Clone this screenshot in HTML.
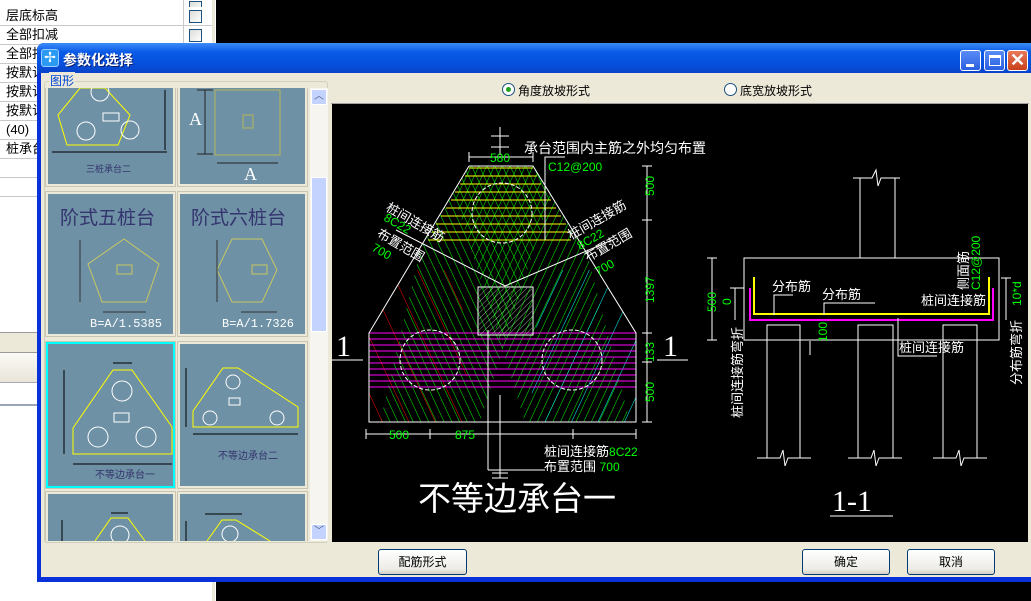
<!DOCTYPE html>
<html><head><meta charset="utf-8">
<style>
*{margin:0;padding:0;box-sizing:border-box}
body{width:1031px;height:601px;overflow:hidden;background:#000;position:relative;font-family:"Liberation Sans","Noto Sans CJK SC","WenQuanYi Zen Hei",sans-serif;font-size:12px}
.abs{position:absolute}
.row{position:absolute;left:0;width:212px;height:19px;border-bottom:1px solid #c8c8c8;background:#fff;font-size:13px;line-height:18px;padding-left:6px;color:#000}
.chk{position:absolute;left:189px;top:3px;width:13px;height:13px;border:1px solid #1c5180;background:linear-gradient(135deg,#dcdcd7,#fff)}
.cell{position:absolute;background:#6e91a6;border:2px solid #ece9d8;outline:1px solid #c9c5b3}
.btn{position:absolute;height:26px;border:1px solid #003c74;border-radius:3px;background:linear-gradient(#fff,#ecebe6 80%,#d6d0c5);text-align:center;line-height:24px;font-size:12px;color:#000}
.tb{position:absolute;top:50px;width:21px;height:21px;border:1px solid #fff;border-radius:3px;background:linear-gradient(#5a8cf6,#2a5fe0)}
</style></head><body>
<div class="abs" style="left:0;top:0;width:216px;height:601px;background:#fff"></div>
<div class="abs" style="left:212px;top:0;width:3px;height:601px;background:#ece9d8"></div>
<div class="row" style="top:-2px"><div class="chk"></div></div>
<div class="row" style="top:7px;height:19px">层底标高<div class="chk"></div></div>
<div class="row" style="top:26px">全部扣减<div class="chk"></div></div>
<div class="row" style="top:45px">全部扣</div>
<div class="row" style="top:64px">按默认</div>
<div class="row" style="top:83px">按默认</div>
<div class="row" style="top:102px">按默认</div>
<div class="row" style="top:121px">(40)</div>
<div class="row" style="top:140px">桩承台</div>
<div class="row" style="top:159px"></div>
<div class="row" style="top:178px"></div>
<div class="abs" style="left:183px;top:0;width:1px;height:200px;background:#c8c8c8"></div>
<div class="abs" style="left:0;top:332px;width:40px;height:1px;background:#999"></div>
<div class="abs" style="left:0;top:333px;width:40px;height:19px;background:#ece9d8"></div>
<div class="abs" style="left:0;top:352px;width:40px;height:1px;background:#999"></div>
<div class="abs" style="left:0;top:353px;width:40px;height:29px;background:linear-gradient(#fbfaf6,#e8e5d8)"></div>
<div class="abs" style="left:0;top:382px;width:40px;height:1px;background:#aab"></div>
<div class="abs" style="left:0;top:404px;width:40px;height:2px;background:#9aa6b8"></div>
<div class="abs" style="left:216px;top:0;width:815px;height:601px;background:#000"></div>

<div class="abs" style="left:37px;top:43px;width:1000px;height:539px;background:#0831d9;border-radius:7px 7px 0 0"></div>
<div class="abs" style="left:37px;top:43px;width:1000px;height:30px;border-radius:7px 7px 0 0;background:linear-gradient(#3d8cf7,#0a5ae8 30%,#0550dd 70%,#0a44c8)"></div>
<div class="abs" style="left:41px;top:49px;width:18px;height:18px;border-radius:3px;background:#2b9af3;border:1px solid #9cf;color:#fff;font-size:14px;line-height:15px;text-align:center">✢</div>
<div class="abs" style="left:63px;top:50px;color:#fff;font-weight:bold;font-size:14px;text-shadow:1px 1px #0a1e6e">参数化选择</div>
<div class="tb" style="left:960px"><div class="abs" style="left:5px;top:13px;width:8px;height:3px;background:#fff"></div></div>
<div class="tb" style="left:984px"><div class="abs" style="left:4px;top:4px;width:12px;height:11px;border:1px solid #fff;border-top-width:3px"></div></div>
<div class="tb" style="left:1007px;background:linear-gradient(#e97a5a,#c9401b);color:#fff;font-size:18px;line-height:19px;text-align:center;font-weight:bold">✕</div>
<div class="abs" style="left:41px;top:73px;width:990px;height:504px;background:#ece9d8"></div>

<div class="abs" style="left:44px;top:81px;width:284px;height:462px;border:1px solid #d0d0bf;border-radius:3px"></div>
<div class="abs" style="left:49px;top:72px;background:#ece9d8;color:#0046d5;font-size:12px;padding:0 1px">图形</div>
<div class="abs" style="left:45px;top:88px;width:265px;height:453px;background:#ece9d8;overflow:hidden">
 <div class="cell" style="left:1px;top:-8px;width:129px;height:106px"></div>
 <div class="cell" style="left:133px;top:-8px;width:129px;height:106px"></div>
 <div class="cell" style="left:1px;top:104px;width:129px;height:144px"></div>
 <div class="cell" style="left:133px;top:104px;width:129px;height:144px"></div>
 <div class="cell" style="left:1px;top:254px;width:129px;height:146px;border:2px solid #00ffff;outline:1px solid #c9c5b3"></div>
 <div class="cell" style="left:133px;top:254px;width:129px;height:146px"></div>
 <div class="cell" style="left:1px;top:404px;width:129px;height:60px"></div>
 <div class="cell" style="left:133px;top:404px;width:129px;height:60px"></div>
</div>
<div class="abs" style="left:310px;top:88px;width:18px;height:453px;background:#f6f5ef"></div>
<div class="abs" style="left:311px;top:89px;width:16px;height:16px;border:1px solid #fff;border-radius:2px;background:#c3d3fd;color:#4d6185;font-size:10px;text-align:center;line-height:14px">︿</div>
<div class="abs" style="left:311px;top:177px;width:16px;height:155px;border:1px solid #fff;border-radius:2px;background:#c3d3fd"></div>
<div class="abs" style="left:311px;top:524px;width:16px;height:16px;border:1px solid #fff;border-radius:2px;background:#c3d3fd;color:#4d6185;font-size:10px;text-align:center;line-height:14px">﹀</div>

<div class="abs" style="left:331px;top:75px;width:698px;height:29px;background:#ece9d8;border-bottom:1px solid #a0a0a0"></div>
<div class="abs" style="left:502px;top:83px;width:13px;height:13px;border-radius:50%;border:1px solid #1c5180;background:#fff"><div class="abs" style="left:3px;top:3px;width:5px;height:5px;border-radius:50%;background:#21a121"></div></div>
<div class="abs" style="left:518px;top:82px;font-size:12px">角度放坡形式</div>
<div class="abs" style="left:724px;top:83px;width:13px;height:13px;border-radius:50%;border:1px solid #1c5180;background:#fff"></div>
<div class="abs" style="left:740px;top:82px;font-size:12px">底宽放坡形式</div>
<div class="abs" style="left:332px;top:104px;width:696px;height:438px;background:#000"></div>

<div class="btn" style="left:378px;top:549px;width:89px">配筋形式</div>
<div class="btn" style="left:802px;top:549px;width:88px">确定</div>
<div class="btn" style="left:907px;top:549px;width:88px">取消</div>

<svg class="abs" style="left:0;top:0" width="1031" height="601" viewBox="0 0 1031 601" font-family="Liberation Sans, Noto Sans CJK SC, sans-serif">
<defs>
 <clipPath id="cv"><rect x="332" y="104" width="696" height="438"/></clipPath>
 <clipPath id="lp"><rect x="47" y="88" width="262" height="453"/></clipPath>
 <clipPath id="sh"><polygon points="469,166 533,166 636,333 636,422 369,422 369,333"/></clipPath>
 <pattern id="g1" width="7" height="7" patternUnits="userSpaceOnUse" patternTransform="rotate(25)"><line x1="0" y1="0" x2="0" y2="7" stroke="#00ff00" stroke-width="1"/></pattern>
 <pattern id="g2" width="7" height="7" patternUnits="userSpaceOnUse" patternTransform="rotate(-25)"><line x1="0" y1="0" x2="0" y2="7" stroke="#00ff00" stroke-width="1"/></pattern>
 <pattern id="rd" width="24" height="24" patternUnits="userSpaceOnUse" patternTransform="rotate(-25)"><line x1="0" y1="0" x2="0" y2="24" stroke="#ff0000"/></pattern>
 <pattern id="cy" width="24" height="24" patternUnits="userSpaceOnUse" patternTransform="rotate(25)"><line x1="0" y1="0" x2="0" y2="24" stroke="#00ffff"/></pattern>
 <pattern id="ht" width="4" height="4" patternUnits="userSpaceOnUse" patternTransform="rotate(45)"><line x1="0" y1="0" x2="0" y2="4" stroke="#fff"/></pattern>
</defs>
<g clip-path="url(#cv)" fill="none" stroke="#fff" stroke-width="1">
 <g clip-path="url(#sh)">
  <polygon points="440,166 560,166 480,422 380,422" fill="url(#g2)" stroke="none"/>
  <polygon points="445,166 565,166 630,422 525,422" fill="url(#g1)" stroke="none"/>
  <polygon points="369,270 460,270 470,422 369,422" fill="url(#rd)" stroke="none"/>
  <polygon points="540,270 636,270 636,422 530,422" fill="url(#cy)" stroke="none"/>
 </g>
 <g stroke="#ffff00">
  <line x1="469" y1="168" x2="533" y2="168"/><line x1="465" y1="176" x2="537" y2="176"/><line x1="460" y1="184" x2="541" y2="184"/>
  <line x1="455" y1="192" x2="546" y2="192"/><line x1="451" y1="200" x2="551" y2="200"/><line x1="446" y1="208" x2="556" y2="208"/>
  <line x1="441" y1="216" x2="561" y2="216"/><line x1="436" y1="224" x2="566" y2="224"/><line x1="432" y1="232" x2="570" y2="232"/><line x1="428" y1="240" x2="571" y2="240"/>
 </g>
 <g stroke="#ff00ff">
  <line x1="369" y1="333" x2="636" y2="333"/><line x1="369" y1="339" x2="636" y2="339"/><line x1="369" y1="345" x2="636" y2="345"/><line x1="369" y1="351" x2="636" y2="351"/>
  <line x1="369" y1="357" x2="636" y2="357"/><line x1="369" y1="363" x2="636" y2="363"/><line x1="369" y1="369" x2="636" y2="369"/><line x1="369" y1="375" x2="636" y2="375"/>
  <line x1="369" y1="381" x2="636" y2="381"/><line x1="369" y1="387" x2="636" y2="387"/>
 </g>
 <polyline points="469,166 533,166 636,333 636,422 369,422 369,333 469,166"/>
 <circle cx="502" cy="213" r="30" stroke-dasharray="4,2"/>
 <circle cx="430" cy="360" r="30" stroke-dasharray="4,2"/>
 <circle cx="572" cy="360" r="30" stroke-dasharray="4,2"/>
 <rect x="478" y="287" width="55" height="48"/>
 <rect x="479" y="288" width="53" height="46" fill="url(#ht)" stroke="none" opacity=".6"/>
 <polyline points="396,230 505,286 612,240"/>
 <line x1="500" y1="127" x2="500" y2="155"/><line x1="491" y1="136" x2="509" y2="136"/><line x1="491" y1="147" x2="509" y2="147"/>
 <line x1="469" y1="157" x2="533" y2="157"/><line x1="469" y1="152" x2="469" y2="162"/><line x1="533" y1="152" x2="533" y2="162"/>
 <polyline points="565,157 545,157 545,240"/>
 <line x1="647" y1="166" x2="647" y2="422"/><line x1="642" y1="166" x2="652" y2="166"/><line x1="642" y1="220" x2="652" y2="220"/><line x1="642" y1="333" x2="652" y2="333"/><line x1="642" y1="362" x2="652" y2="362"/><line x1="642" y1="422" x2="652" y2="422"/>
 <line x1="488" y1="330" x2="488" y2="470"/><polyline points="488,470 545,470"/>
 <line x1="500" y1="395" x2="500" y2="478"/><line x1="492" y1="473" x2="508" y2="473"/><line x1="492" y1="478" x2="508" y2="478"/>
 <line x1="366" y1="434" x2="636" y2="434"/><line x1="366" y1="429" x2="366" y2="439"/><line x1="430" y1="429" x2="430" y2="439"/><line x1="573" y1="429" x2="573" y2="439"/><line x1="636" y1="429" x2="636" y2="439"/>
 <line x1="332" y1="360" x2="363" y2="360"/><line x1="657" y1="360" x2="688" y2="360"/>
 <polyline points="853,178 872,178 876,170 878,186 881,178 900,178"/>
 <line x1="860" y1="178" x2="860" y2="258"/><line x1="895" y1="178" x2="895" y2="258"/>
 <rect x="744" y="258" width="255" height="82"/>
 <polyline points="754,277 754,314 989,314 989,277" stroke="#ffff00" stroke-width="2"/>
 <polyline points="750,288 750,320 993,320 993,288" stroke="#ff00ff" stroke-width="2"/>
 <polyline points="767,458 767,325 800,325 800,458"/><polyline points="858,458 858,325 893,325 893,458"/><polyline points="943,458 943,325 977,325 977,458"/>
 <polyline points="757,458 780,458 783,450 785,466 788,458 811,458"/>
 <polyline points="848,458 871,458 874,450 876,466 879,458 902,458"/>
 <polyline points="933,458 956,458 959,450 961,466 964,458 987,458"/>
 <line x1="712" y1="258" x2="712" y2="340"/><line x1="707" y1="258" x2="717" y2="258"/><line x1="707" y1="340" x2="717" y2="340"/>
 <line x1="735" y1="288" x2="735" y2="320"/><line x1="730" y1="288" x2="744" y2="288"/>
 <line x1="810" y1="341" x2="810" y2="355"/>
 <polyline points="774,315 774,295 793,295"/><polyline points="824,315 824,303 875,303"/>
 <polyline points="898,318 898,356 937,356"/>
 <line x1="1006" y1="278" x2="1006" y2="320"/><line x1="1001" y1="278" x2="1011" y2="278"/>
 <line x1="830" y1="516" x2="893" y2="516"/>
</g>
<g clip-path="url(#cv)" font-size="13">
 <text x="524" y="153" fill="#fff" font-size="14">承台范围内主筋之外均匀布置</text>
 <text x="490" y="162" fill="#0f0" font-size="12">580</text>
 <text x="548" y="171" fill="#0f0" font-size="12">C12@200</text>
 <text transform="translate(385,210) rotate(30)" fill="#fff">桩间连接筋</text>
 <text transform="translate(383,220) rotate(30)" fill="#0f0" font-size="12">8C22</text>
 <text transform="translate(376,236) rotate(30)" fill="#fff">布置范围</text>
 <text transform="translate(371,250) rotate(30)" fill="#0f0" font-size="12">700</text>
 <text transform="translate(571,240) rotate(-30)" fill="#fff">桩间连接筋</text>
 <text transform="translate(580,250) rotate(-30)" fill="#0f0" font-size="12">8C22</text>
 <text transform="translate(588,262) rotate(-30)" fill="#fff">布置范围</text>
 <text transform="translate(598,276) rotate(-30)" fill="#0f0" font-size="12">700</text>
 <g fill="#0f0" font-size="12">
  <text transform="translate(654,196) rotate(-90)">500</text>
  <text transform="translate(654,303) rotate(-90)">1397</text>
  <text transform="translate(654,362) rotate(-90)">133</text>
  <text transform="translate(654,402) rotate(-90)">500</text>
  <text x="389" y="439">500</text><text x="455" y="439">875</text>
 </g>
 <text x="336" y="356" fill="#fff" font-size="30" font-family="Liberation Serif,serif">1</text>
 <text x="663" y="356" fill="#fff" font-size="30" font-family="Liberation Serif,serif">1</text>
 <text x="544" y="456" fill="#fff">桩间连接筋<tspan fill="#0f0" font-size="12">8C22</tspan></text>
 <text x="544" y="471" fill="#fff">布置范围 <tspan fill="#0f0" font-size="12">700</tspan></text>
 <text x="418" y="510" fill="#fff" font-size="33">不等边承台一</text>
 <text x="832" y="511" fill="#fff" font-size="30" font-family="Liberation Serif,serif">1-1</text>
 <text x="772" y="291" fill="#fff">分布筋</text>
 <text x="822" y="299" fill="#fff">分布筋</text>
 <text x="921" y="305" fill="#fff">桩间连接筋</text>
 <text x="899" y="352" fill="#fff">桩间连接筋</text>
 <text transform="translate(968,290) rotate(-90)" fill="#fff">侧面筋</text>
 <text transform="translate(980,290) rotate(-90)" fill="#0f0" font-size="12">C12@200</text>
 <text transform="translate(1021,306) rotate(-90)" fill="#0f0" font-size="12">10*d</text>
 <text transform="translate(1021,385) rotate(-90)" fill="#fff">分布筋弯折</text>
 <text transform="translate(742,418) rotate(-90)" fill="#fff">桩间连接筋弯折</text>
 <text transform="translate(716,312) rotate(-90)" fill="#0f0" font-size="12">500</text>
 <text transform="translate(731,305) rotate(-90)" fill="#0f0" font-size="12">0</text>
 <text transform="translate(827,342) rotate(-90)" fill="#0f0" font-size="12">100</text>
</g>
<g clip-path="url(#lp)" fill="none" stroke-width="1">
 <polygon points="80,88 105,88 130,115 118,145 67,145 58,115" stroke="#ffff00"/>
 <g stroke="#fff"><circle cx="86" cy="131" r="9"/><circle cx="130" cy="130" r="9"/><rect x="103" y="113" width="16" height="8"/><circle cx="100" cy="92" r="9"/></g>
 <g stroke="#000"><line x1="52" y1="152" x2="167" y2="152"/><line x1="165" y1="90" x2="165" y2="150"/></g>
 <text x="86" y="172" fill="#33336b" font-size="9" stroke="none">三桩承台二</text>
 <rect x="215" y="90" width="65" height="65" stroke="#b5b55a"/>
 <rect x="243" y="115" width="10" height="13" stroke="#b5b55a"/>
 <g stroke="#222"><line x1="205" y1="90" x2="205" y2="154"/><line x1="197" y1="90" x2="213" y2="90"/><line x1="197" y1="154" x2="213" y2="154"/><line x1="217" y1="163" x2="278" y2="163"/></g>
 <text x="189" y="125" fill="#fff" font-size="18" stroke="none" font-family="Liberation Serif,serif">A</text>
 <text x="244" y="180" fill="#fff" font-size="18" stroke="none" font-family="Liberation Serif,serif">A</text>
 <text x="60" y="224" fill="#34346e" font-size="19" stroke="none">阶式五桩台</text>
 <text x="191" y="224" fill="#34346e" font-size="19" stroke="none">阶式六桩台</text>
 <polygon points="124,239 159,264 146,302 102,302 88,264" stroke="#c8c860"/>
 <polygon points="232,239 262,239 277,270 262,302 232,302 217,270" stroke="#c8c860"/>
 <rect x="117" y="265" width="15" height="9" stroke="#c8c860"/><rect x="252" y="265" width="15" height="9" stroke="#c8c860"/>
 <g stroke="#333"><line x1="80" y1="240" x2="80" y2="302"/><line x1="217" y1="240" x2="217" y2="302"/><line x1="103" y1="312" x2="146" y2="312"/><line x1="241" y1="312" x2="277" y2="312"/></g>
 <text x="90" y="327" fill="#fff" font-size="12" stroke="none" font-family="Liberation Mono,monospace">B=A/1.5385</text>
 <text x="222" y="327" fill="#fff" font-size="12" stroke="none" font-family="Liberation Mono,monospace">B=A/1.7326</text>
 <polygon points="113,370 132,370 172,427 172,454 73,454 73,428" stroke="#ffff00"/>
 <g stroke="#fff"><circle cx="122" cy="391" r="10"/><circle cx="98" cy="437" r="10"/><circle cx="146" cy="437" r="10"/><rect x="114" y="413" width="15" height="9"/></g>
 <g stroke="#000"><line x1="73" y1="464" x2="172" y2="464"/><line x1="64" y1="370" x2="64" y2="454"/><line x1="113" y1="363" x2="132" y2="363"/></g>
 <text x="95" y="478" fill="#33336b" font-size="10" stroke="none">不等边承台一</text>
 <polygon points="223,368 238,368 298,407 298,427 193,427 193,411" stroke="#ffff00"/>
 <g stroke="#fff"><circle cx="233" cy="382" r="7"/><circle cx="210" cy="418" r="7"/><circle cx="277" cy="418" r="7"/><rect x="229" y="398" width="11" height="7"/></g>
 <g stroke="#000"><line x1="193" y1="434" x2="298" y2="434"/><line x1="186" y1="368" x2="186" y2="427"/></g>
 <text x="218" y="459" fill="#33336b" font-size="10" stroke="none">不等边承台二</text>
 <polyline points="95,541 111,518 128,518 145,541" stroke="#ffff00"/>
 <circle cx="120" cy="535" r="9" stroke="#fff"/>
 <polyline points="207,541 222,520 236,520 270,541" stroke="#ffff00"/>
 <circle cx="230" cy="534" r="8" stroke="#fff"/>
 <g stroke="#000"><line x1="111" y1="513" x2="128" y2="513"/><line x1="62" y1="520" x2="62" y2="541"/><line x1="205" y1="514" x2="242" y2="514"/><line x1="186" y1="521" x2="186" y2="541"/></g>
</g>
</svg>
</body></html>
